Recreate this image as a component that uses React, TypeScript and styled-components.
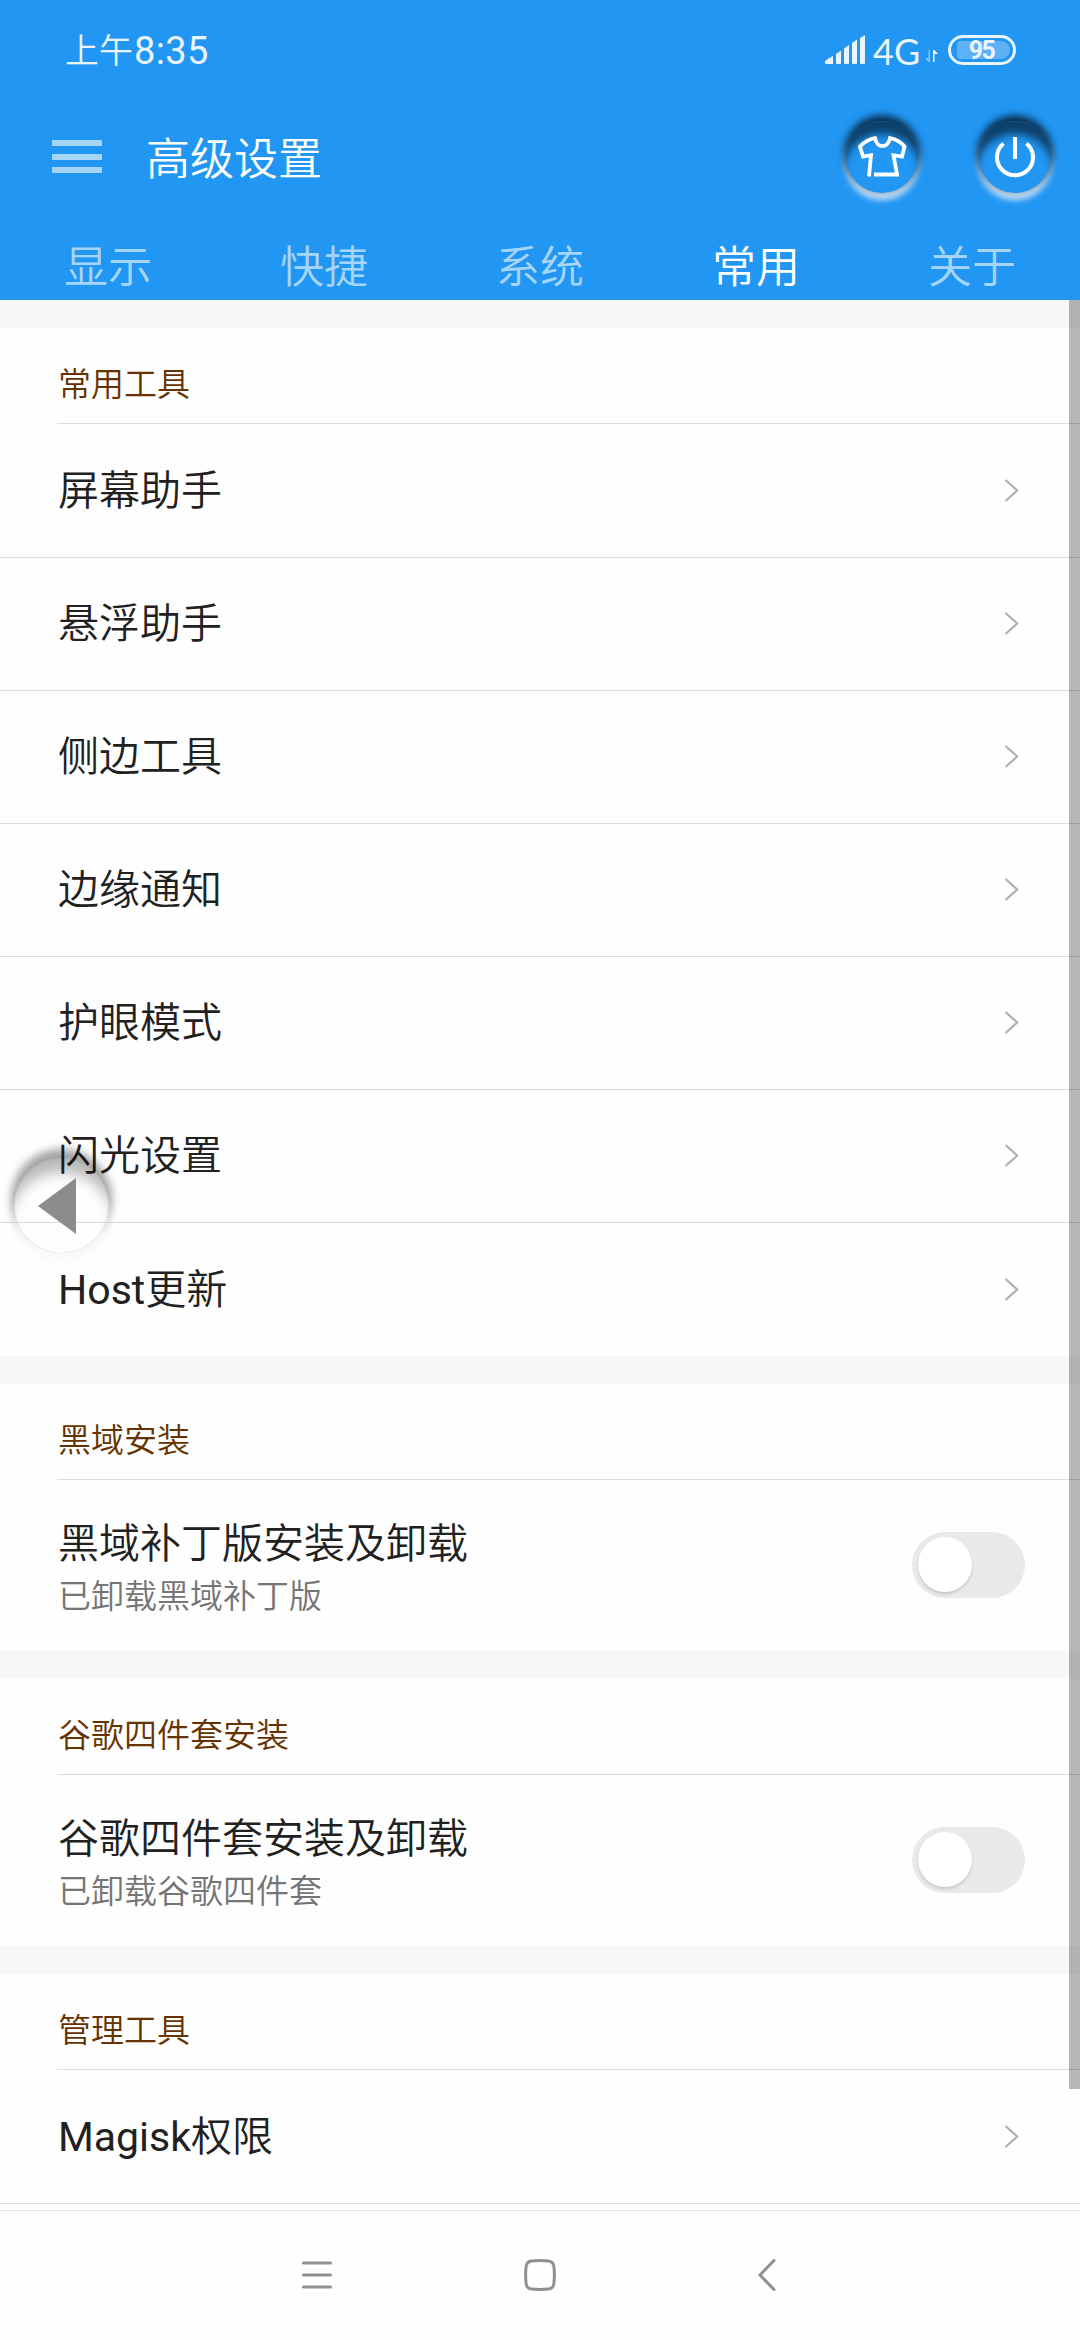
import React from "react";
import styled, { createGlobalStyle, css } from "styled-components";

const GlobalStyle = createGlobalStyle`
  * { box-sizing: border-box; }
  body {
    margin: 0;
    background: #fff;
    font-family: Roboto, "Noto Sans CJK SC", sans-serif;
  }
`;

const cjkLight = css`
  font-family: Roboto, "Noto Sans CJK SC DemiLight", "Noto Sans CJK SC Light", "Noto Sans CJK SC", sans-serif;
  font-weight: 400;
`;

const Screen = styled.div`
  position: relative;
  width: 1080px;
  height: 2340px;
  overflow: hidden;
  display: flex;
  flex-direction: column;
  background: #fefefe;
`;

const Header = styled.header`
  height: 300px;
  flex: none;
  background: #2196f3;
  color: #fff;
  display: flex;
  flex-direction: column;
`;

const StatusBar = styled.div`
  height: 100px;
  padding: 0 64px 0 65px;
  display: flex;
  align-items: center;
  justify-content: space-between;
  color: #e9f4fe;
`;

const Clock = styled.span`
  ${cjkLight}
  display: flex;
  align-items: center;
  font-size: 34px;
  line-height: 50px;
  padding-top: 2px;
`;

const ClockDigits = styled.span`
  font-size: 38px;
  margin-left: 1px;
  letter-spacing: 0.4px;
`;

const StatusIcons = styled.div`
  display: flex;
  align-items: center;
  height: 34px;
`;

const Network = styled.span`
  font-family: Lato, sans-serif;
  font-size: 36px;
  line-height: 34px;
  margin-left: 8px;
  width: 52px;
  padding-top: 1px;
`;

const Battery = styled.div`
  width: 68px;
  height: 30px;
  border: 3px solid #e9f4fe;
  border-radius: 15px;
  padding: 3px;
  margin-left: 10px;
`;

const BatteryLevel = styled.div`
  width: 53px;
  height: 18px;
  margin-left: 3px;
  border-radius: 3px 9px 9px 3px;
  background: #5fb1f7;
  display: flex;
  align-items: center;
  justify-content: center;
  font: 700 25px/18px Roboto, sans-serif;
  letter-spacing: -1.5px;
  padding: 1px 4px 0 0;
`;

const TitleBar = styled.div`
  height: 114px;
  padding: 0 29px 0 52px;
  display: flex;
  align-items: center;
`;

const MenuIcon = styled.div`
  width: 50px;
  height: 33px;
  margin-bottom: 1px;
  display: flex;
  flex-direction: column;
  justify-content: space-between;
  &::before, &::after { content: ""; }
  &::before, &::after, & > span {
    height: 6px;
    background: #a6d5fa;
  }
`;

const Title = styled.h1`
  ${cjkLight}
  margin: 0 0 0 44px;
  font-size: 44px;
  line-height: 60px;
  flex: 1;
  padding-top: 5px;
`;

const RoundButton = styled.button`
  width: 72px;
  height: 72px;
  margin-left: 61px;
  padding: 0;
  border: 0;
  border-radius: 50%;
  background: transparent;
  color: #fff;
  display: flex;
  align-items: center;
  justify-content: center;
  box-shadow: 0 -4px 7px 2px rgba(5, 32, 54, 0.85), 0 6px 6px 1px rgba(215, 232, 248, 0.95),
    inset 0 17px 9px -4px rgba(10, 42, 70, 0.8);
`;

const Tabs = styled.nav`
  flex: 1;
  display: grid;
  grid-template-columns: repeat(5, 1fr);
  padding-top: 24px;
`;

const Tab = styled.div<{ $active?: boolean }>`
  ${cjkLight}
  font-size: 44px;
  line-height: 60px;
  text-align: center;
  color: ${(p) => (p.$active ? "#fff" : "#a6d5fa")};
`;

const Content = styled.main`
  flex: 1;
  min-height: 0;
  overflow: hidden;
`;

const Section = styled.section`
  border-top: 28px solid #f7f7f7;
`;

const SectionTitle = styled.h2`
  ${cjkLight}
  height: 96px;
  margin: 0 0 0 57px;
  padding: 17px 0 0 1px;
  border-bottom: 1px solid #dcdcdc;
  font-size: 33px;
  line-height: 79px;
  color: #663300;
`;

const Row = styled.div`
  height: 133px;
  padding: 0 61px 0 58px;
  display: flex;
  align-items: center;
  justify-content: space-between;
  & + & { border-top: 1px solid #dcdcdc; }
  & + &:last-child { height: 134px; }
`;

const SwitchRow = styled(Row)`
  height: 171px;
  padding-right: 55px;
`;

const SwitchText = styled.div`
  padding-top: 4px;
`;

const Label = styled.div`
  ${cjkLight}
  font-size: 41px;
  line-height: 58px;
  color: #212121;
`;

const Summary = styled.div`
  ${cjkLight}
  font-size: 33px;
  line-height: 48px;
  color: #757575;
`;

const Switch = styled.div`
  width: 113px;
  height: 66px;
  border-radius: 33px;
  background: #e9e9e9;
  padding: 5px 6px;
  margin-bottom: 1px;
  &::before {
    content: "";
    display: block;
    width: 54px;
    height: 55px;
    border-radius: 50%;
    background: #fff;
    box-shadow: 0 2px 3px rgba(0, 0, 0, 0.15);
  }
`;

const NavBar = styled.footer`
  flex: none;
  height: 130px;
  border-top: 1px solid #e0e0e0;
  display: flex;
  align-items: center;
  padding: 0 0 1px 302px;
`;

const NavKey = styled.svg<{ $gap?: number }>`
  display: block;
  margin-left: ${(p) => p.$gap ?? 0}px;
  fill: none;
  stroke: #8f8f8f;
  stroke-width: 3;
  stroke-linecap: round;
`;

const Scrollbar = styled.div`
  position: absolute;
  top: 300px;
  right: 0;
  width: 11px;
  height: 1789px;
  background: rgba(0, 0, 0, 0.28);
`;

const FloatingBack = styled.button`
  position: absolute;
  left: 14px;
  top: 1158px;
  width: 95px;
  height: 95px;
  padding: 0 9px 0 0;
  border: 0;
  border-radius: 50%;
  background: transparent;
  display: flex;
  align-items: center;
  justify-content: center;
  box-shadow: 0 10px 6px -1px rgba(250, 250, 250, 0.9), 0 -6px 9px 3px rgba(0, 0, 0, 0.36),
    inset 0 20px 14px -6px rgba(0, 0, 0, 0.28), inset 0 0 2px rgba(0, 0, 0, 0.14);
`;

const DataArrowsIcon = styled.svg`
  margin-top: 12px;
`;

const Chevron = () => (
  <svg width="15" height="24" viewBox="0 0 15 24" fill="none" stroke="#adadad" strokeWidth="2">
    <path d="M1.500 1 13.200 11.500 1.500 22" />
  </svg>
);

const Signal = () => (
  <svg width="40" height="30" viewBox="0 0 40 30" fill="#e9f4fe">
    <path d="M0 26Q4 23 8 21V29H1Q0 29 0 28Z" />
    <path d="M11 19 16 15.500V28Q16 29 15 29H12Q11 29 11 28Z" />
    <path d="M19 13.500 24 10V28Q24 29 23 29H20Q19 29 19 28Z" />
    <path d="M27 8 32 4.500V28Q32 29 31 29H28Q27 29 27 28Z" />
    <path d="M35 3 40 0V28Q40 29 39 29H36Q35 29 35 28Z" />
  </svg>
);

const DataArrows = () => (
  <DataArrowsIcon width="13" height="13" viewBox="0 0 13 13">
    <path d="M5 0V12H3.500L0 8H3.500V0Z" fill="#83c3f9" />
    <path d="M8 12V0H9.500L13 4H9.500V12Z" fill="#e9f4fe" />
  </DataArrowsIcon>
);

const Shirt = () => (
  <svg width="50" height="44" viewBox="0 0 50 44" fill="none" stroke="#fff" strokeWidth="3.800">
    <path d="M12 41.500 14 20.200 6 21.600 3 11.500Q9 5 18 3.200C20 13.800 31 13.800 33 3.200Q42 5 47.500 11.500L45 21.600 36.500 20.200 40 39.500H17" />
  </svg>
);

const Power = () => (
  <svg width="44" height="44" viewBox="0 0 44 44" fill="none" stroke="#fff" strokeWidth="4">
    <path d="M22 2V24" />
    <path d="M10.500 8.500A18 18 0 1 0 33.500 8.500" />
  </svg>
);

const tabs = ["显示", "快捷", "系统", "常用", "关于"];
const tools = ["屏幕助手", "悬浮助手", "侧边工具", "边缘通知", "护眼模式", "闪光设置", "Host更新"];

const LinkRow = ({ label }: { label: string }) => (
  <Row>
    <Label>{label}</Label>
    <Chevron />
  </Row>
);

const ToggleRow = ({ label, summary }: { label: string; summary: string }) => (
  <SwitchRow>
    <SwitchText>
      <Label>{label}</Label>
      <Summary>{summary}</Summary>
    </SwitchText>
    <Switch />
  </SwitchRow>
);

export default function App() {
  return (
    <Screen>
      <GlobalStyle />
      <Header>
        <StatusBar>
          <Clock>上午<ClockDigits>8:35</ClockDigits></Clock>
          <StatusIcons>
            <Signal />
            <Network>4G</Network>
            <DataArrows />
            <Battery>
              <BatteryLevel>95</BatteryLevel>
            </Battery>
          </StatusIcons>
        </StatusBar>
        <TitleBar>
          <MenuIcon><span /></MenuIcon>
          <Title>高级设置</Title>
          <RoundButton aria-label="主题"><Shirt /></RoundButton>
          <RoundButton aria-label="电源"><Power /></RoundButton>
        </TitleBar>
        <Tabs>
          {tabs.map((t) => (
            <Tab key={t} $active={t === "常用"}>{t}</Tab>
          ))}
        </Tabs>
      </Header>
      <Content>
        <Section>
          <SectionTitle>常用工具</SectionTitle>
          {tools.map((t) => <LinkRow key={t} label={t} />)}
        </Section>
        <Section>
          <SectionTitle>黑域安装</SectionTitle>
          <ToggleRow label="黑域补丁版安装及卸载" summary="已卸载黑域补丁版" />
        </Section>
        <Section>
          <SectionTitle>谷歌四件套安装</SectionTitle>
          <ToggleRow label="谷歌四件套安装及卸载" summary="已卸载谷歌四件套" />
        </Section>
        <Section>
          <SectionTitle>管理工具</SectionTitle>
          <LinkRow label="Magisk权限" />
          <Row />
        </Section>
      </Content>
      <NavBar>
        <NavKey width="30" height="30" viewBox="0 0 30 30">
          <path d="M1.500 3H28.500M1.500 15H28.500M1.500 27H28.500" />
        </NavKey>
        <NavKey $gap={192} width="32" height="32" viewBox="0 0 32 32">
          <path d="M7.500 2Q16 1.200 24.500 2Q29 2.500 29.800 7Q31 16 29.800 25Q29 29.500 24.500 30Q16 30.800 7.500 30Q3 29.500 2.200 25Q1 16 2.200 7Q3 2.500 7.500 2Z" />
        </NavKey>
        <NavKey $gap={202} width="18" height="32" viewBox="0 0 18 32">
          <path d="M16 1.500 2 16 16 30.500" />
        </NavKey>
      </NavBar>
      <Scrollbar />
      <FloatingBack aria-label="返回">
        <svg width="38" height="56" viewBox="0 0 38 56" fill="#8c8c8c">
          <path d="M0 28 38 0V56Z" />
        </svg>
      </FloatingBack>
    </Screen>
  );
}
